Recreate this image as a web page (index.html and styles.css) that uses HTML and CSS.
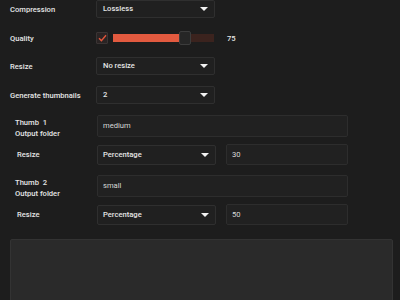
FILE: index.html
```html
<!DOCTYPE html>
<html lang="en">
<head>
    <meta charset="UTF-8">
    <title>Export settings</title>
    <link rel="stylesheet" href="styles.css">
</head>
<body>
    <div class="panel">
        <!-- Compression -->
        <div class="row">
            <label class="label">Compression</label>
            <div class="select">Lossless<span class="arrow"></span></div>
        </div>

        <!-- Quality -->
        <div class="row">
            <label class="label">Quality</label>
            <div class="quality">
                <span class="check">
                    <svg width="9" height="8" viewBox="0 0 9 8"><path d="M1 4.2 L3.4 6.6 L8 1.2" fill="none" stroke="#e0553b" stroke-width="1.4"/></svg>
                </span>
                <div class="slider">
                    <div class="fill" style="width: 67%"></div>
                    <span class="thumb"></span>
                </div>
                <span class="value">75</span>
            </div>
        </div>

        <!-- Resize -->
        <div class="row">
            <label class="label">Resize</label>
            <div class="select">No resize<span class="arrow"></span></div>
        </div>

        <!-- Generate thumbnails -->
        <div class="row">
            <label class="label">Generate thumbnails</label>
            <div class="select">2<span class="arrow"></span></div>
        </div>

        <!-- Thumb 1 -->
        <div class="thumb-block">
            <div class="sub-row folder">
                <label class="sub-label">Thumb &nbsp;1<br>Output folder</label>
                <div class="input wide">medium</div>
            </div>
            <div class="sub-row">
                <label class="sub-label resize">Resize</label>
                <div class="select small">Percentage<span class="arrow"></span></div>
                <div class="input num">30</div>
            </div>
        </div>

        <!-- Thumb 2 -->
        <div class="thumb-block">
            <div class="sub-row folder">
                <label class="sub-label">Thumb &nbsp;2<br>Output folder</label>
                <div class="input wide">small</div>
            </div>
            <div class="sub-row">
                <label class="sub-label resize">Resize</label>
                <div class="select small">Percentage<span class="arrow"></span></div>
                <div class="input num">50</div>
            </div>
        </div>

        <div class="notes"></div>
    </div>
</body>
</html>
```

FILE: styles.css
```css
/* Base */
body {
    margin: 0;
    background-color: #1d1d1d;
    font-family: Roboto, "Liberation Sans", sans-serif;
    font-size: 7.6px;
    font-weight: 500;
    color: #e6e6e6;
    overflow: hidden;
}
.panel {
    padding: 0 7px 0 10px;
}
/* Main rows */
.row {
    display: flex;
    align-items: center;
    height: 18px;
    margin-bottom: 11px;
}
.row:nth-child(3) {
    margin-top: -1px;
}
.row:nth-child(4) {
    margin-top: 2px;
    margin-bottom: 11px;
}
.label {
    width: 86px;
}
/* Select boxes */
.select {
    position: relative;
    box-sizing: border-box;
    width: 119px;
    height: 18px;
    line-height: 16px;
    padding-left: 6px;
    background-color: #202020;
    border: 1px solid #2f2f2f;
    border-radius: 2px;
}
.arrow {
    position: absolute;
    right: 6px;
    top: 6px;
    border-left: 4px solid transparent;
    border-right: 4px solid transparent;
    border-top: 4px solid #f2f2f2;
}
/* Quality */
.quality {
    display: flex;
    align-items: center;
}
.check {
    box-sizing: border-box;
    width: 12px;
    height: 12px;
    display: flex;
    align-items: center;
    justify-content: center;
    background-color: #2a2424;
    border: 1px solid #3a3434;
    border-radius: 1px;
}
.slider {
    position: relative;
    width: 101px;
    height: 8px;
    margin-left: 5px;
    background-color: #3b231e;
}
.fill {
    height: 100%;
    background-color: #e25a3f;
}
.thumb {
    position: absolute;
    left: 66px;
    top: -3px;
    box-sizing: border-box;
    width: 12px;
    height: 14px;
    background-color: #262626;
    border: 1px solid #3c3c3c;
    border-radius: 2px;
}
.value {
    margin-left: 13px;
}
/* Thumbnail blocks */
.thumb-block {
    padding-left: 5px;
    margin-bottom: 10px;
}
.sub-row {
    display: flex;
    align-items: center;
    margin-bottom: 7px;
}
.sub-row.folder {
    height: 22px;
}
.sub-label {
    width: 82px;
    line-height: 11px;
    padding-top: 4px;
}
.sub-label.resize {
    padding-left: 2px;
    padding-top: 0;
    width: 80px;
}
.input {
    box-sizing: border-box;
    height: 21px;
    line-height: 19px;
    padding-left: 5px;
    background-color: #212121;
    border: 1px solid #2d2d2d;
    border-radius: 2px;
    color: #d8d8d8;
    font-weight: 400;
}
.input.wide {
    width: 251px;
    height: 22px;
    line-height: 20px;
}
.select.small {
    height: 20px;
    line-height: 18px;
    padding-left: 5px;
}
.select.small .arrow {
    top: 7px;
}
.input.num {
    width: 122px;
    margin-left: 10px;
}
/* Notes area */
.notes {
    box-sizing: border-box;
    width: 383px;
    height: 80px;
    margin-top: 14px;
    background-color: #2a2a2a;
    border: 1px solid #333;
    border-radius: 2px;
}
```
